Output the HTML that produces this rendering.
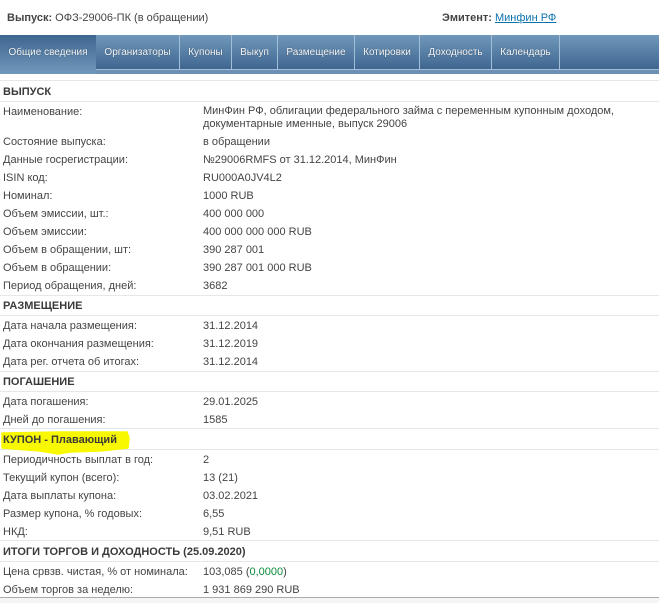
<!DOCTYPE html>
<html lang="ru"><head><meta charset="utf-8"><style>
html,body{margin:0;padding:0;width:659px;height:603px;overflow:hidden;background:#fff}
body{position:relative;font:11px/14px "Liberation Sans",Arial,sans-serif;color:#444}
.t{position:absolute;white-space:nowrap}
.l{position:absolute;left:0;width:659px;height:1px;background:#e3e8ec}
.h{font-weight:bold;color:#3a3a3a;left:3px}
.a{left:3px}.b{left:203px}
#bar{position:absolute;left:0;top:35px;width:659px;height:39px;background:#6b90b4}
.tab{position:absolute;top:35px;height:34px;background:linear-gradient(#7098bb,#3f6690);border-right:1px solid #a3bed6;color:#f4f7fa;font-size:10px;line-height:35px;text-align:center;box-sizing:border-box;text-shadow:0 0 1px #345}
.tab.on{height:39px;background:linear-gradient(#3f6690,#7098bb);border:0;line-height:35px}
#fill{position:absolute;top:35px;left:559px;width:100px;height:34px;background:linear-gradient(#7098bb,#3f6690)}
#ln{position:absolute;top:69px;left:96px;width:563px;height:1px;background:#a3bed6}
a{color:#0b72ad;text-decoration:underline}
</style></head><body>
<div class="t" style="left:7px;top:11px"><b>Выпуск:</b> ОФЗ-29006-ПК (в обращении)</div>
<div class="t" style="left:442px;top:11px"><b>Эмитент:</b> <a>Минфин РФ</a></div>
<div id="bar"></div><div id="fill"></div><div id="ln"></div>
<div class="tab on" style="left:0;width:96px">Общие сведения</div>
<div class="tab" style="left:96px;width:84px">Организаторы</div>
<div class="tab" style="left:180px;width:52px">Купоны</div>
<div class="tab" style="left:232px;width:46px">Выкуп</div>
<div class="tab" style="left:278px;width:77px">Размещение</div>
<div class="tab" style="left:355px;width:65px">Котировки</div>
<div class="tab" style="left:420px;width:72px">Доходность</div>
<div class="tab" style="left:492px;width:68px">Календарь</div>

<div class="l" style="top:80px"></div>
<div class="t h" style="top:85px">ВЫПУСК</div>
<div class="l" style="top:101px"></div>
<div class="t a" style="top:105px">Наименование:</div>
<div class="t b" style="top:105px;line-height:13px">МинФин РФ, облигации федерального займа с переменным купонным доходом,<br>документарные именные, выпуск 29006</div>
<div class="t a" style="top:135px">Состояние выпуска:</div><div class="t b" style="top:135px">в обращении</div>
<div class="t a" style="top:153px">Данные госрегистрации:</div><div class="t b" style="top:153px">№29006RMFS от 31.12.2014, МинФин</div>
<div class="t a" style="top:171px">ISIN код:</div><div class="t b" style="top:171px">RU000A0JV4L2</div>
<div class="t a" style="top:189px">Номинал:</div><div class="t b" style="top:189px">1000 RUB</div>
<div class="t a" style="top:207px">Объем эмиссии, шт.:</div><div class="t b" style="top:207px">400 000 000</div>
<div class="t a" style="top:225px">Объем эмиссии:</div><div class="t b" style="top:225px">400 000 000 000 RUB</div>
<div class="t a" style="top:243px">Объем в обращении, шт:</div><div class="t b" style="top:243px">390 287 001</div>
<div class="t a" style="top:261px">Объем в обращении:</div><div class="t b" style="top:261px">390 287 001 000 RUB</div>
<div class="t a" style="top:279px">Период обращения, дней:</div><div class="t b" style="top:279px">3682</div>

<div class="l" style="top:295px"></div>
<div class="t h" style="top:299px">РАЗМЕЩЕНИЕ</div>
<div class="l" style="top:315px"></div>
<div class="t a" style="top:319px">Дата начала размещения:</div><div class="t b" style="top:319px">31.12.2014</div>
<div class="t a" style="top:337px">Дата окончания размещения:</div><div class="t b" style="top:337px">31.12.2019</div>
<div class="t a" style="top:355px">Дата рег. отчета об итогах:</div><div class="t b" style="top:355px">31.12.2014</div>

<div class="l" style="top:371px"></div>
<div class="t h" style="top:375px">ПОГАШЕНИЕ</div>
<div class="l" style="top:391px"></div>
<div class="t a" style="top:395px">Дата погашения:</div><div class="t b" style="top:395px">29.01.2025</div>
<div class="t a" style="top:413px">Дней до погашения:</div><div class="t b" style="top:413px">1585</div>

<div class="l" style="top:428px"></div>
<div class="l" style="top:449px"></div>
<svg style="position:absolute;left:0;top:428px" width="135" height="30"><path d="M2 5 L60 4 L127 4 L129 10 L128 20 L100 23 L70 24 L58 26 L40 23 L2 20 Z" fill="#f8f800" stroke="#f8f800" stroke-linejoin="round" stroke-width="1.5"/></svg>
<div class="t h" style="top:433px">КУПОН - Плавающий</div>
<div class="t a" style="top:453px">Периодичность выплат в год:</div><div class="t b" style="top:453px">2</div>
<div class="t a" style="top:471px">Текущий купон (всего):</div><div class="t b" style="top:471px">13 (21)</div>
<div class="t a" style="top:489px">Дата выплаты купона:</div><div class="t b" style="top:489px">03.02.2021</div>
<div class="t a" style="top:507px">Размер купона, % годовых:</div><div class="t b" style="top:507px">6,55</div>
<div class="t a" style="top:525px">НКД:</div><div class="t b" style="top:525px">9,51 RUB</div>

<div class="l" style="top:540px"></div>
<div class="t h" style="top:545px">ИТОГИ ТОРГОВ И ДОХОДНОСТЬ (25.09.2020)</div>
<div class="l" style="top:561px"></div>
<div class="t a" style="top:565px">Цена срвзв. чистая, % от номинала:</div><div class="t b" style="top:565px">103,085 (<span style="color:#0a8a3a">0,0000</span>)</div>
<div class="t a" style="top:583px">Объем торгов за неделю:</div><div class="t b" style="top:583px">1 931 869 290 RUB</div>
<div style="position:absolute;left:0;top:597px;width:659px;height:1px;background:#aaa"></div>
<div style="position:absolute;left:0;top:598px;width:659px;height:5px;background:#f5f5f5"></div>
</body></html>
